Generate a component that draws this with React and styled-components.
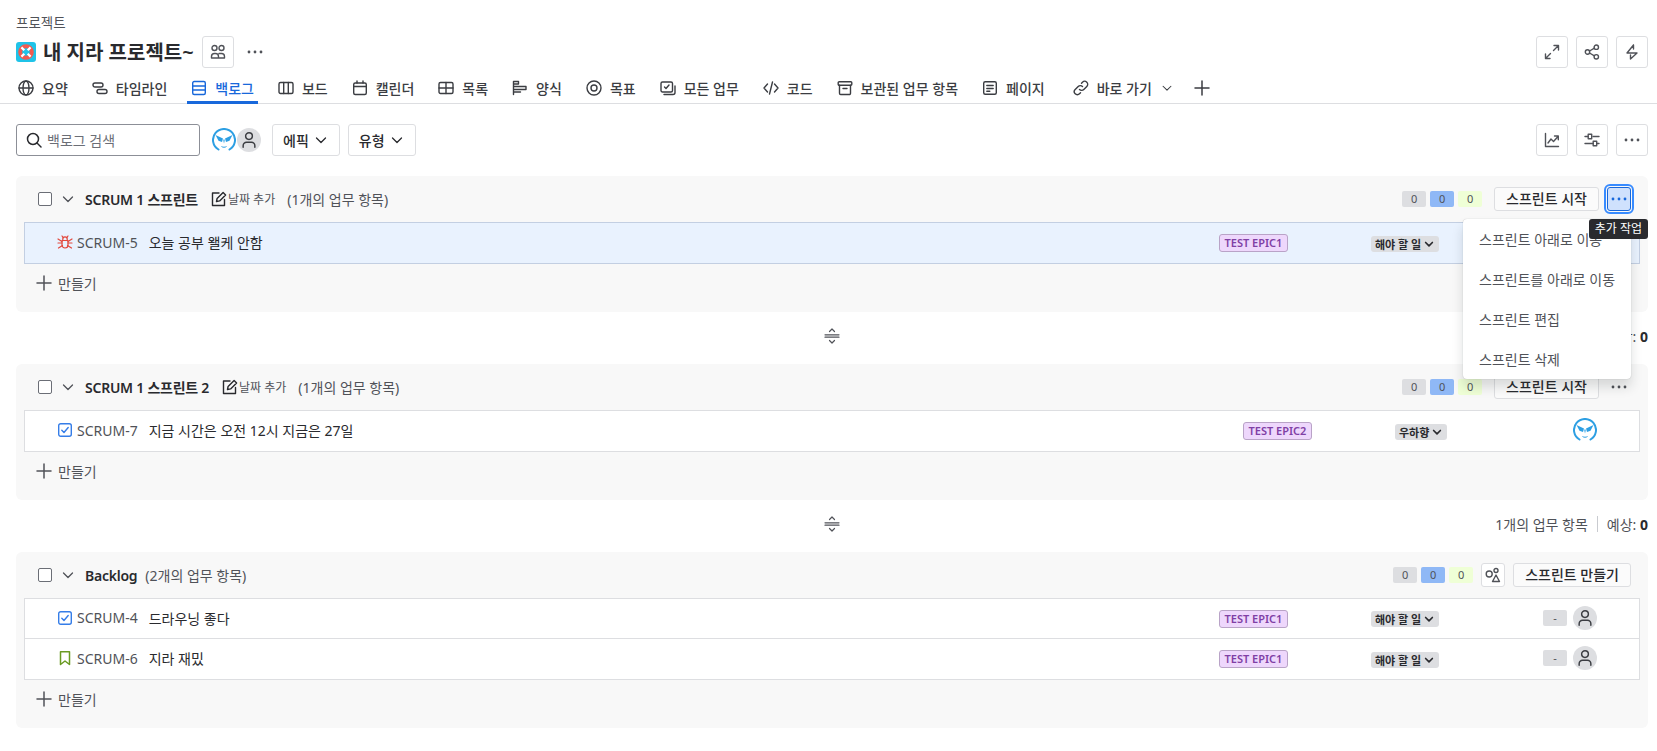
import styled, { createGlobalStyle } from "styled-components";

const Global = createGlobalStyle`
    * { box-sizing: border-box; }
    html, body { margin: 0; padding: 0; background: #fff; }
    body {
        font-family: "Noto Sans", "Noto Sans CJK KR", sans-serif;
        font-size: 14px;
        color: #292a2e;
        overflow: hidden;
    }
`;

const Page = styled.div`
    width: 1657px;
    height: 751px;
`;

const Header = styled.header`
    border-bottom: 1px solid #dddee1;
`;

const Breadcrumb = styled.div`
    height: 36px;
    padding: 15px 0 0 16px;
    font-size: 13.5px;
    line-height: 16px;
    color: #505258;
`;

const TitleRow = styled.div`
    display: flex;
    align-items: center;
    justify-content: space-between;
    height: 32px;
    padding: 0 9px 0 16px;
`;

const Group = styled.div`
    display: flex;
    align-items: center;
    gap: ${(p) => p.$gap ?? 8}px;
`;

const ProjectName = styled.h1`
    margin: 0 0 0 -1px;
    padding-top: 1px;
    font-size: 20px;
    font-weight: 600;
    line-height: 24px;
    color: #292a2e;
`;

const IconButton = styled.button`
    display: flex;
    align-items: center;
    justify-content: center;
    width: ${(p) => p.$size ?? 32}px;
    height: ${(p) => p.$size ?? 32}px;
    padding: 0;
    background: #fff;
    border: 1px solid ${(p) => (p.$plain ? "transparent" : "#dddee1")};
    border-radius: 3px;
    color: #505258;
    ${(p) => p.$plain && "background: transparent; margin-left: -3px;"}
`;

const SmallAction = styled(IconButton)`
    margin-left: 4px;
`;

const Tabs = styled.nav`
    display: flex;
    gap: 16px;
    height: 30px;
    margin-top: 5px;
    padding-left: 14px;
`;

const Tab = styled.div`
    display: flex;
    align-items: center;
    gap: 8px;
    height: 31px;
    padding: 2px 4px 0;
    border-bottom: 3px solid ${(p) => (p.$active ? "#1868db" : "transparent")};
    font-weight: 500;
    white-space: nowrap;
    color: ${(p) => (p.$active ? "#1868db" : "#3b3d42")};
    ${(p) => p.$spaced && "margin-left: 4px;"}
`;

const AddTab = styled.div`
    display: flex;
    align-items: center;
    height: 30px;
    color: #3b3d42;
`;

const Toolbar = styled.div`
    display: flex;
    align-items: center;
    justify-content: space-between;
    height: 32px;
    margin: 20px 0;
    padding: 0 9px 0 16px;
`;

const Search = styled.div`
    display: flex;
    align-items: center;
    gap: 5px;
    width: 184px;
    height: 32px;
    padding: 0 9px 1px;
    border: 1px solid #8c8f97;
    border-radius: 3px;
    color: #6b6e76;
    font-size: 14px;
`;

const Avatars = styled.div`
    display: flex;
    align-items: center;
    margin: 0 11px 0 12px;
    gap: 1px;
`;

const PersonCircle = styled.div`
    display: flex;
    align-items: center;
    justify-content: center;
    width: 24px;
    height: 24px;
    border-radius: 50%;
    background: #dddee1;
    color: #3b3d42;
`;

const AvatarSlot = styled.div`
    display: flex;
    margin-left: ${(p) => (p.$afterPoints ? 0 : 6)}px;
`;

const Filter = styled.button`
    display: flex;
    align-items: center;
    gap: 4px;
    height: 32px;
    padding: 0 10px;
    background: #fff;
    border: 1px solid #dddee1;
    border-radius: 3px;
    font: inherit;
    font-weight: 500;
    color: #292a2e;
`;

const Sections = styled.main`
    padding: 0 9px 0 16px;
`;

const Section = styled.section`
    background: #f8f8f8;
    border-radius: 6px;
    padding-bottom: 8px;
`;

const SectionHead = styled.div`
    display: flex;
    align-items: center;
    justify-content: space-between;
    height: 46px;
    padding: 0 17px 0 22px;
`;

const HeadLeft = styled.div`
    display: flex;
    align-items: center;
    color: #505258;
`;

const Checkbox = styled.span`
    width: 14px;
    height: 14px;
    border: 1px solid #6b6e76;
    border-radius: 2px;
    background: #fff;
    margin-right: 8px;
`;

const SprintName = styled.strong`
    margin: 0 13px 0 9px;
    font-weight: 600;
    font-size: 14px;
    letter-spacing: -0.25px;
    color: #292a2e;
`;

const AddDate = styled.span`
    display: flex;
    align-items: center;
    gap: 1px;
    margin-right: 12px;
    font-size: 12px;
    color: #505258;
`;

const ItemCount = styled.span`
    color: #505258;
    ${(p) => p.$tight && "margin-left: -5px;"}
`;

const Counter = styled.span`
    width: 24px;
    height: 16px;
    border-radius: 2px;
    background: ${(p) => p.$bg};
    color: #505258;
    font-size: 11px;
    line-height: 16px;
    text-align: center;
`;

const Ghost = styled.button`
    height: 24px;
    padding: 0 11px;
    margin-left: ${(p) => (p.$near ? 4 : 8)}px;
    background: #fbfbfb;
    border: 1px solid #dddee1;
    border-radius: 3px;
    font: inherit;
    font-weight: 500;
    line-height: 20px;
    color: #292a2e;
`;

const MoreWrap = styled.div`
    position: relative;
    margin-left: 4px;
`;

const More = styled.button`
    display: flex;
    align-items: center;
    justify-content: center;
    width: 24px;
    height: 24px;
    padding: 0;
    border-radius: 3px;
    background: ${(p) => (p.$open ? "#cfe1fd" : "transparent")};
    border: 1px solid ${(p) => (p.$open ? "#1868db" : "transparent")};
    color: ${(p) => (p.$open ? "#1868db" : "#505258")};
    ${(p) => p.$open && "outline: 2px solid #388bff; outline-offset: 1px;"}
`;

const Menu = styled.div`
    position: absolute;
    top: 32px;
    right: 0;
    z-index: 5;
    width: 168px;
    background: #fff;
    border-radius: 4px;
    box-shadow: 0 8px 12px rgba(30, 31, 33, 0.15), 0 0 1px rgba(30, 31, 33, 0.31);
`;

const MenuItem = styled.div`
    display: flex;
    align-items: center;
    height: 40px;
    padding-left: 16px;
    white-space: nowrap;
    color: #505258;
`;

const Tooltip = styled.div`
    position: absolute;
    top: 32px;
    right: -17px;
    z-index: 6;
    height: 20px;
    padding: 0 6px;
    border-radius: 3px;
    background: #292a2e;
    color: #fff;
    font-size: 12px;
    line-height: 20px;
    white-space: nowrap;
`;

const Rows = styled.div`
    margin: 0 8px;
    background: #fff;
    border: 1px solid #dddee1;
`;

const Row = styled.div`
    display: flex;
    align-items: center;
    height: 40px;
    padding: 0 42px 2px 32px;
    background: ${(p) => (p.$selected ? "#e9f2fe" : "#fff")};
    ${(p) => !p.$last && "border-bottom: 1px solid #dddee1;"}
`;

const SelectedRows = styled(Rows)`
    border-color: #c3cfe2;
`;

const Key = styled.span`
    margin: 0 11px 0 4px;
    color: #505258;
`;

const Summary = styled.span`
    flex: 1;
    color: #292a2e;
`;

const EpicCol = styled.div`
    width: 152px;
`;

const StatusCol = styled.div`
    width: 172px;
`;

const Epic = styled.span`
    display: inline-block;
    height: 18px;
    padding: 0 4.5px;
    border: 1px solid #b9a3c7;
    border-radius: 3px;
    background: #eed7fc;
    color: #803fa5;
    font-size: 11px;
    font-weight: 600;
    line-height: 16px;
    vertical-align: middle;
`;

const Status = styled.span`
    display: inline-flex;
    align-items: center;
    gap: 2px;
    height: 16px;
    padding: 0 4px;
    border-radius: 3px;
    background: #dddee1;
    color: #292a2e;
    font-size: 11px;
    font-weight: 700;
    vertical-align: middle;
`;

const Points = styled.span`
    width: 24px;
    height: 16px;
    margin-right: 6px;
    border-radius: 2px;
    background: #dddee1;
    font-size: 11px;
    line-height: 16px;
    text-align: center;
    color: #505258;
`;

const Create = styled.div`
    display: flex;
    align-items: center;
    gap: 6px;
    height: 40px;
    padding: 0 0 2px 20px;
    color: #505258;
`;

const Footer = styled.div`
    display: grid;
    grid-template-columns: 1fr auto 1fr;
    align-items: center;
    height: 52px;
    padding-bottom: 4px;
    color: #505258;
`;

const Handle = styled.div`
    grid-column: 2;
    display: flex;
    color: #505258;
`;

const Totals = styled.div`
    grid-column: 3;
    display: flex;
    align-items: center;
    justify-content: flex-end;
    gap: 9px;
`;

const Split = styled.span`
    width: 1px;
    height: 16px;
    background: #c9cbd0;
`;

const Estimate = styled.b`
    color: #292a2e;
    font-weight: 700;
`;

function Ic({ size = 16, children, color = "currentColor", width = 1.4 }) {
    return (
        <svg width={size} height={size} viewBox="0 0 16 16" fill="none" stroke={color} strokeWidth={width} strokeLinecap="round" strokeLinejoin="round" style={{ flex: "none" }}>
            {children}
        </svg>
    );
}

const Dots = () => (
    <svg width="18" height="16" viewBox="0 0 18 16" fill="currentColor" style={{ flex: "none" }}>
        <circle cx="3" cy="8" r="1.4" /><circle cx="9" cy="8" r="1.4" /><circle cx="15" cy="8" r="1.4" />
    </svg>
);

const Chevron = ({ size = 16, width = 1.3 }) => (
    <Ic size={size} width={width}><path d="M3.5 6l4.5 4.5L12.5 6" /></Ic>
);

const Plus = () => <Ic width={1.5}><path d="M8 1v14M1 8h14" /></Ic>;

const Lifebuoy = () => (
    <svg width="20" height="20" viewBox="0 0 20 20" style={{ flex: "none" }}>
        <rect width="20" height="20" rx="3" fill="#1fc3e8" />
        <circle cx="10" cy="10" r="5.8" fill="none" stroke="#f15b50" strokeWidth="4" />
        <path d="M5.4 5.4l2.9 2.9M14.6 5.4l-2.9 2.9M5.4 14.6l2.9-2.9M14.6 14.6l-2.9-2.9" stroke="#fff" strokeWidth="2.2" />
    </svg>
);

const Mask = () => (
    <svg width="24" height="24" viewBox="0 0 24 24" style={{ flex: "none" }}>
        <path d="M6.5 21.5A11 11 0 1 1 17.5 21.5" fill="#fff" stroke="#2d9fe3" strokeWidth="2" strokeLinecap="round" />
        <path d="M3.5 7l7.5 3.5-1 3.5-3.5-1.2zM20.5 7L13 10.5l1 3.5 3.5-1.2z" fill="#2d9fe3" />
        <path d="M10.5 11.5L12 15.5l1.5-4z" fill="#7cc4ef" />
        <path d="M9.5 18.5c1.5 1 3.5 1 5 0" fill="none" stroke="#2d9fe3" strokeWidth="1" />
    </svg>
);

const Person = ({ size = 18 }) => (
    <Ic size={size} width={1.3}>
        <circle cx="8" cy="4.5" r="3" />
        <path d="M2.8 14.5v-1.5a3 3 0 0 1 3-3h4.4a3 3 0 0 1 3 3v1.5" />
    </Ic>
);

const BugIcon = () => (
    <Ic color="#e2483d" width={1.2}>
        <path d="M5 6.5h6v4.5a3 3 0 0 1-6 0zM5.8 6.5V5a2.2 2.2 0 0 1 4.4 0v1.5" />
        <path d="M5 2L6.2 3.6M11 2L9.8 3.6M1 5l4 2.5M15 5l-4 2.5M1 9h4M15 9h-4M1.5 14L5.5 11.5M14.5 14l-4-2.5" />
    </Ic>
);

const TaskIcon = () => (
    <Ic color="#357de8" width={1.4}>
        <rect x="1.7" y="1.7" width="12.6" height="12.6" rx="2" />
        <path d="M4.8 8.2l2.2 2.3 4.2-5" />
    </Ic>
);

const StoryIcon = () => (
    <Ic color="#6a9a23" width={1.5}>
        <path d="M3.5 14.5V1.8h9v12.7L8 11z" />
    </Ic>
);

const Edit = () => (
    <Ic color="#292a2e" width={1.4}>
        <path d="M8 2H1.5v12.5h12V8.5" />
        <path d="M5.5 10.5l.6-3.1 6-6 2.5 2.5-6 6z" />
    </Ic>
);

const tabs = [
    ["요약", <Ic key="a"><circle cx="8" cy="8" r="7" /><ellipse cx="8" cy="8" rx="3" ry="7" /><path d="M1 8h14" /></Ic>],
    ["타임라인", <Ic key="b"><rect x="1" y="3" width="10" height="4" rx="2" /><rect x="5" y="9.5" width="10" height="4" rx="2" /></Ic>],
    ["백로그", <Ic key="c"><rect x="1.7" y="1.5" width="12.6" height="13" rx="1.5" /><path d="M1.7 6h12.6M1.7 10h12.6" /></Ic>, true],
    ["보드", <Ic key="d"><rect x="1" y="2.5" width="14" height="11" rx="1.5" /><path d="M5.7 2.5v11M10.3 2.5v11" /></Ic>],
    ["캘린더", <Ic key="e"><rect x="1.7" y="3" width="12.6" height="11.5" rx="1.5" /><path d="M1.7 6.5h12.6M5 1v2M11 1v2" /></Ic>],
    ["목록", <Ic key="f"><rect x="1" y="2.5" width="14" height="11" rx="1.5" /><path d="M1 8h14M8 2.5v11" /></Ic>],
    ["양식", <Ic key="g"><path d="M1.5 1.5h5v2.5h-5zM1.5 6.5H14v3H1.5zM1.5 12h7M1.5 1.5v13" /></Ic>],
    ["목표", <Ic key="h"><circle cx="8" cy="8" r="7" /><circle cx="8" cy="8" r="3" /></Ic>],
    ["모든 업무", <Ic key="i"><rect x="1" y="2" width="11.5" height="10" rx="1.5" /><path d="M4.5 7l1.5 1.5 3-3.5M15 6v6.5a2 2 0 0 1-2 2H4" /></Ic>],
    ["코드", <Ic key="j"><path d="M4.5 4L1 8l3.5 4M11.5 4L15 8l-3.5 4M9.5 2l-3 12" /></Ic>],
    ["보관된 업무 항목", <Ic key="k"><rect x="1.2" y="1.7" width="13.6" height="3.6" rx="1" /><path d="M2.5 5.3v8a1.2 1.2 0 0 0 1.2 1.2h8.6a1.2 1.2 0 0 0 1.2-1.2v-8M6 8.5h4" /></Ic>],
    ["페이지", <Ic key="l"><rect x="1.7" y="1.7" width="12.6" height="12.6" rx="1.5" /><path d="M4.8 5.5h6.4M4.8 8.5h6.4M4.8 11.2h3" /></Ic>],
];

const LinkIcon = () => (
    <Ic>
        <path d="M6.5 9.5a3 3 0 0 0 4.3 0l3-3a3 3 0 0 0-4.3-4.3l-1 1" />
        <path d="M9.5 6.5a3 3 0 0 0-4.3 0l-3 3a3 3 0 0 0 4.3 4.3l1-1" />
    </Ic>
);

function Row3({ type, id, title, epic, status, points, selected, last, person }) {
    const Type = { bug: BugIcon, task: TaskIcon, story: StoryIcon }[type];
    return (
        <Row $selected={selected} $last={last}>
            <Type />
            <Key>{id}</Key>
            <Summary>{title}</Summary>
            <EpicCol><Epic>{epic}</Epic></EpicCol>
            <StatusCol>
                <Status>{status}<Chevron size={12} width={2.2} /></Status>
            </StatusCol>
            {points && <Points>-</Points>}
            <AvatarSlot $afterPoints={points}>
                {person ? <PersonCircle><Person /></PersonCircle> : <Mask />}
            </AvatarSlot>
        </Row>
    );
}

const Counts = () => (
    <>
        <Counter $bg="#dddee1">0</Counter>
        <Counter $bg="#8fb8f6">0</Counter>
        <Counter $bg="#efffd6">0</Counter>
    </>
);

const Tally = ({ count }) => (
    <Footer>
        <Handle>
            <Ic width={1.2}>
                <path d="M5.5 3.5L8 1l2.5 2.5M5.5 12.5L8 15l2.5-2.5M1 6.8h14M1 9.2h14" />
            </Ic>
        </Handle>
        <Totals>
            {count}개의 업무 항목
            <Split />
            <span>예상: <Estimate>0</Estimate></span>
        </Totals>
    </Footer>
);

const CreateRow = () => (
    <Create><Plus />만들기</Create>
);

export default function App() {
    return (
        <Page>
            <Global />
            <Header>
                <Breadcrumb>프로젝트</Breadcrumb>
                <TitleRow>
                    <Group>
                        <Lifebuoy />
                        <ProjectName>내 지라 프로젝트~</ProjectName>
                        <IconButton>
                            <Ic>
                                <circle cx="4.5" cy="4" r="2.5" /><circle cx="11.5" cy="4" r="2.5" />
                                <path d="M1.5 14v-1.5a3 3 0 0 1 3-3h1a3 3 0 0 1 3 3V14zM9 9.5h2.5a3 3 0 0 1 3 3V14H9" />
                            </Ic>
                        </IconButton>
                        <IconButton $plain><Dots /></IconButton>
                    </Group>
                    <Group>
                        <IconButton><Ic><path d="M9.5 6.5L14.5 1.5M10 1.5h4.5V6M6.5 9.5l-5 5M1.5 10v4.5H6" /></Ic></IconButton>
                        <IconButton><Ic><circle cx="3.5" cy="8" r="2.2" /><circle cx="12.3" cy="3.2" r="2.2" /><circle cx="12.3" cy="12.8" r="2.2" /><path d="M5.5 7l4.9-2.8M5.5 9l4.9 2.8" /></Ic></IconButton>
                        <IconButton><Ic><path d="M9.5 1L3 9h10L6.5 15M9.5 1v4M6.5 15v-4" /></Ic></IconButton>
                    </Group>
                </TitleRow>
                <Tabs>
                    {tabs.map(([label, icon, active]) => (
                        <Tab key={label} $active={active}>{icon}{label}</Tab>
                    ))}
                    <Tab $spaced><LinkIcon />바로 가기<Chevron size={14} width={1.2} /></Tab>
                    <AddTab><Plus /></AddTab>
                </Tabs>
            </Header>
            <Toolbar>
                <Group $gap={0}>
                    <Search>
                        <Ic color="#292a2e" width={1.5}><circle cx="7" cy="7" r="5.5" /><path d="M11 11l4 4" /></Ic>
                        백로그 검색
                    </Search>
                    <Avatars>
                        <Mask />
                        <PersonCircle><Person /></PersonCircle>
                    </Avatars>
                    <Group>
                        <Filter>에픽<Chevron /></Filter>
                        <Filter>유형<Chevron /></Filter>
                    </Group>
                </Group>
                <Group>
                    <IconButton><Ic><path d="M1.5 1.5v13h13M4 11l3-4 2.5 2.5L14 4.5M10.5 4H14.3v3.8" /></Ic></IconButton>
                    <IconButton><Ic><path d="M1 4.5h3M9 4.5h6M1 11.5h8M13 11.5h2" /><rect x="4.2" y="2.2" width="3.5" height="4.6" /><rect x="9.2" y="9.2" width="3.5" height="4.6" /></Ic></IconButton>
                    <IconButton><Dots /></IconButton>
                </Group>
            </Toolbar>
            <Sections>
                <Section>
                    <SectionHead>
                        <HeadLeft>
                            <Checkbox />
                            <Chevron />
                            <SprintName>SCRUM 1 스프린트</SprintName>
                            <AddDate><Edit />날짜 추가</AddDate>
                            <ItemCount>(1개의 업무 항목)</ItemCount>
                        </HeadLeft>
                        <Group $gap={4}>
                            <Counts />
                            <Ghost>스프린트 시작</Ghost>
                            <MoreWrap>
                                <More $open><Dots /></More>
                                <Menu>
                                    <MenuItem>스프린트 아래로 이동</MenuItem>
                                    <MenuItem>스프린트를 아래로 이동</MenuItem>
                                    <MenuItem>스프린트 편집</MenuItem>
                                    <MenuItem>스프린트 삭제</MenuItem>
                                </Menu>
                                <Tooltip>추가 작업</Tooltip>
                            </MoreWrap>
                        </Group>
                    </SectionHead>
                    <SelectedRows>
                        <Row3 selected last type="bug" id="SCRUM-5" title="오늘 공부 왤케 안함" epic="TEST EPIC1" status="해야 할 일" points person />
                    </SelectedRows>
                    <CreateRow />
                </Section>
                <Tally count={1} />
                <Section>
                    <SectionHead>
                        <HeadLeft>
                            <Checkbox />
                            <Chevron />
                            <SprintName>SCRUM 1 스프린트 2</SprintName>
                            <AddDate><Edit />날짜 추가</AddDate>
                            <ItemCount>(1개의 업무 항목)</ItemCount>
                        </HeadLeft>
                        <Group $gap={4}>
                            <Counts />
                            <Ghost>스프린트 시작</Ghost>
                            <MoreWrap><More><Dots /></More></MoreWrap>
                        </Group>
                    </SectionHead>
                    <Rows>
                        <Row3 last type="task" id="SCRUM-7" title="지금 시간은 오전 12시 지금은 27일" epic="TEST EPIC2" status="우하향" />
                    </Rows>
                    <CreateRow />
                </Section>
                <Tally count={1} />
                <Section>
                    <SectionHead>
                        <HeadLeft>
                            <Checkbox />
                            <Chevron />
                            <SprintName>Backlog</SprintName>
                            <ItemCount $tight>(2개의 업무 항목)</ItemCount>
                        </HeadLeft>
                        <Group $gap={4}>
                            <Counts />
                            <SmallAction $size={24}>
                                <Ic size={16}><circle cx="4.2" cy="7" r="3" /><circle cx="11" cy="3.5" r="2" /><path d="M11 8l3.5 6.5h-7z" /></Ic>
                            </SmallAction>
                            <Ghost $near>스프린트 만들기</Ghost>
                        </Group>
                    </SectionHead>
                    <Rows>
                        <Row3 type="task" id="SCRUM-4" title="드라우닝 좋다" epic="TEST EPIC1" status="해야 할 일" points person />
                        <Row3 last type="story" id="SCRUM-6" title="지라 재밌" epic="TEST EPIC1" status="해야 할 일" points person />
                    </Rows>
                    <CreateRow />
                </Section>
            </Sections>
        </Page>
    );
}
